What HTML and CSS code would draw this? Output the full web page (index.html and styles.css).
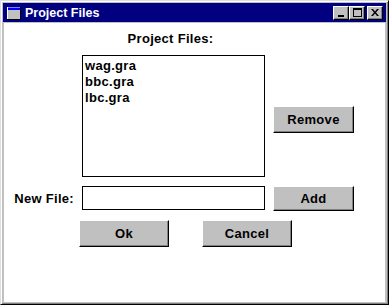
FILE: index.html
```html
<!DOCTYPE html>
<html lang="en">
<head>
    <meta charset="UTF-8">
    <title>Project Files</title>
    <link rel="stylesheet" href="styles.css">
</head>
<body>
    <div class="window">
        <div class="title-bar">
            <svg class="app-icon" width="14" height="13" viewBox="0 0 14 13">
                <rect x="0" y="0" width="13" height="12" fill="#c0c0c0"/>
                <rect x="0" y="0" width="13" height="3" fill="#0000ff"/>
                <rect x="0" y="0" width="13" height="1" fill="#8080ff"/>
                <rect x="0" y="0" width="1" height="12" fill="#ffffff"/>
                <rect x="13" y="0" width="1" height="13" fill="#000000"/>
                <rect x="0" y="12" width="14" height="1" fill="#000000"/>
            </svg>
            <span class="title-text">Project Files</span>
            <div class="caption-buttons">
                <button class="caption-btn">
                    <svg width="8" height="8" viewBox="0 0 8 8"><rect x="1" y="6" width="6" height="2" fill="#000"/></svg>
                </button>
                <button class="caption-btn">
                    <svg width="9" height="9" viewBox="0 0 9 9"><path d="M0 0H9V9H0Z M1 2V8H8V2Z" fill="#000" fill-rule="evenodd"/></svg>
                </button>
                <button class="caption-btn close">
                    <svg width="8" height="7" viewBox="0 0 8 7"><path d="M0 0H2L4 2.5L6 0H8L5 3.5L8 7H6L4 4.5L2 7H0L3 3.5Z" fill="#000"/></svg>
                </button>
            </div>
        </div>

        <div class="content">
            <div class="heading">Project Files:</div>

            <div class="form-grid">
                <div></div>
                <div class="listbox">
                    <div class="list-item">wag.gra</div>
                    <div class="list-item">bbc.gra</div>
                    <div class="list-item">lbc.gra</div>
                </div>
                <button class="btn remove-btn">Remove</button>

                <label class="field-label" for="newfile">New File:</label>
                <input class="textbox" id="newfile" type="text">
                <button class="btn add-btn">Add</button>
            </div>

            <div class="actions">
                <button class="btn action-btn">Ok</button>
                <button class="btn action-btn">Cancel</button>
            </div>
        </div>
    </div>
</body>
</html>
```

FILE: styles.css
```css
* {
    margin: 0;
    padding: 0;
    box-sizing: border-box;
}

body {
    background: #ffffff;
    font-family: 'Liberation Sans', Arial, sans-serif;
    font-weight: bold;
    font-size: 13px;
    letter-spacing: 0.3px;
    color: #000;
}

.window {
    width: 389px;
    height: 305px;
    background: #c0c0c0;
    border: 1px solid;
    border-color: #dfdfdf #000 #000 #dfdfdf;
    box-shadow: inset 1px 1px #fff, inset -1px -1px #808080;
    padding: 2px;
    display: flex;
    flex-direction: column;
}

.title-bar {
    height: 19px;
    background: #000080;
    display: flex;
    align-items: center;
    padding: 0 3px 0 4px;
}

.app-icon {
    display: block;
    margin-top: 1px;
}

.title-text {
    color: #fff;
    font-size: 12.5px;
    margin-left: 4px;
    letter-spacing: 0;
}

.caption-buttons {
    margin-left: auto;
    display: flex;
}

.caption-btn {
    width: 16px;
    height: 14px;
    background: #c0c0c0;
    border: 1px solid;
    border-color: #fff #000 #000 #fff;
    box-shadow: inset -1px -1px #808080;
    display: flex;
    align-items: center;
    justify-content: center;
}

.caption-btn svg {
    display: block;
}

.caption-btn.close {
    margin-left: 2px;
}

.content {
    flex: 1;
    background: #fff;
    margin: 1px 1px 0 1px;
    padding-top: 8px;
}

.heading {
    height: 16px;
    line-height: 16px;
    text-align: center;
    margin-bottom: 8px;
    width: 333px;
}

.form-grid {
    display: grid;
    grid-template-columns: 78px 191px 80px;
    row-gap: 9px;
}

.listbox {
    width: 183px;
    height: 122px;
    border: 1px solid #000;
    padding: 2px 0 0 2px;
}

.list-item {
    height: 16px;
    line-height: 16px;
}

.btn {
    background: #c0c0c0;
    border: 1px solid;
    border-color: #fff #000 #000 #fff;
    box-shadow: inset -1px -1px #808080;
    font-family: 'Liberation Sans', Arial, sans-serif;
    font-weight: bold;
    font-size: 13px;
    letter-spacing: 0.3px;
    color: #000;
}

.remove-btn {
    width: 81px;
    height: 27px;
    align-self: start;
    margin-top: 51px;
}

.field-label {
    align-self: center;
    justify-self: end;
    padding-right: 8px;
    margin-top: -1px;
}

.textbox {
    width: 183px;
    height: 24px;
    border: 1px solid #000;
    outline: none;
}

.add-btn {
    width: 81px;
    height: 25px;
}

.actions {
    display: flex;
    gap: 33px;
    padding-left: 75px;
    margin-top: 9px;
}

.action-btn {
    width: 90px;
    height: 27px;
}
```
